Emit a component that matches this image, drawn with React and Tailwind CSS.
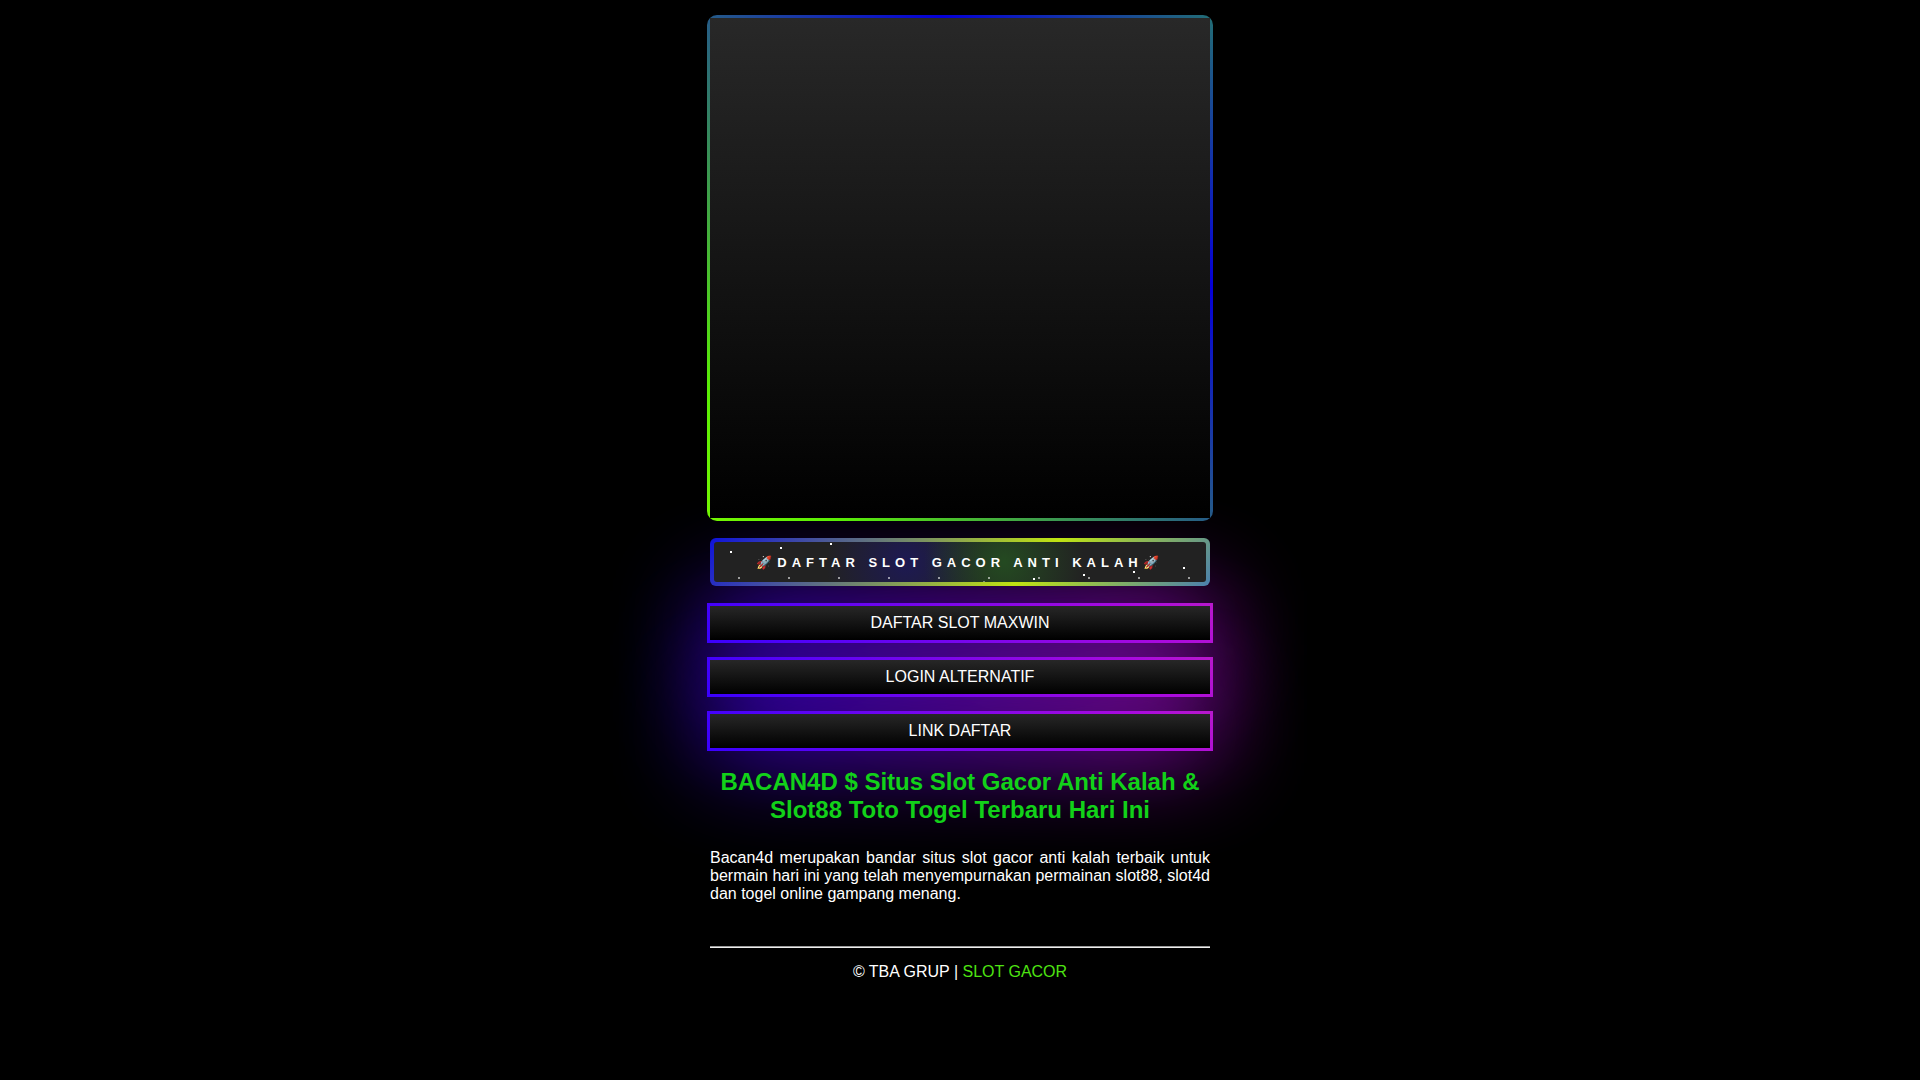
import React from 'react';

const LINKS = ['DAFTAR SLOT MAXWIN', 'LOGIN ALTERNATIF', 'LINK DAFTAR'];

const BRIGHT_STARS = [
  [16, 9], [66, 5], [116, 1], [319, 36], [369, 32], [419, 29], [469, 25]
];
const DIM_STARS = [25, 75, 125, 175, 225, 275, 325, 375, 425, 475];

const Stars = () => (
  <svg className="absolute inset-0 h-full w-full" aria-hidden="true">
    {DIM_STARS.map((x) => (
      <rect key={x} x={x - 1} y="35" width="2" height="2" fill="#fff" fillOpacity="0.55" />
    ))}
    {BRIGHT_STARS.map(([x, y]) => (
      <rect key={x} x={x} y={y} width="2" height="2" fill="#fff" />
    ))}
    <rect x="269" y="39" width="2" height="1" fill="#fff" fillOpacity="0.4" />
  </svg>
);

const Banner = () => (
  <button
    type="button"
    className="h-12 w-full rounded-md bg-[linear-gradient(135deg,#0f12dc_0%,#c0e312_64%,#4a80ae_100%)] p-1"
  >
    <span className="relative flex h-full items-center justify-center overflow-hidden rounded-[3px] bg-[#222] bg-[radial-gradient(circle_at_59%_50%,#244a21_0px,#244a2100_80px),radial-gradient(circle_at_39%_50%,#1d1953_0px,#1d195300_80px)] pt-px">
      <Stars />
      <span className="relative whitespace-nowrap text-[13px] font-bold tracking-[5px] text-white">
        🚀DAFTAR SLOT GACOR ANTI KALAH🚀
      </span>
    </span>
  </button>
);

const GlowLink = ({ label }) => (
  <a href="#" className="relative block text-white">
    <span className="absolute -inset-[3px] -z-10 bg-[linear-gradient(45deg,#3a00ff,#b80fd0)] opacity-95 blur-[50px]" />
    <span className="-mx-[3px] block bg-[linear-gradient(45deg,#3a00ff,#aa0ade_85%,#b818cc)] p-[3px]">
      <span className="block bg-[linear-gradient(to_bottom,#272727,#000)] py-2 text-center text-base leading-[18px]">
        {label}
      </span>
    </span>
  </a>
);

const App = () => (
  <div className="min-h-screen bg-black px-4 pt-[15px] pb-12 font-['Liberation_Sans',Arial,sans-serif] text-white">
    <main className="relative z-0 mx-auto w-full max-w-[500px]">
      <div className="-mx-[3px] rounded-[10px] bg-[linear-gradient(45deg,#74f602_0%,#5aee05_13%,#0500d8_73%,#236e74_100%)] p-[3px]">
        <div className="aspect-square bg-[linear-gradient(to_bottom,#282828,#000)]" />
      </div>

      <div className="mt-[17px]">
        <Banner />
      </div>

      <nav className="mt-[17px] flex flex-col gap-[14px]">
        {LINKS.map((label) => (
          <GlowLink key={label} label={label} />
        ))}
      </nav>

      <h1 className="mt-[17px] text-center text-2xl leading-7 font-bold text-[#12d119]">
        BACAN4D $ Situs Slot Gacor Anti Kalah &amp; Slot88 Toto Togel Terbaru Hari Ini
      </h1>

      <p className="mt-[25px] text-justify text-base leading-[18px]">
        Bacan4d merupakan bandar situs slot gacor anti kalah terbaik untuk bermain hari ini yang
        telah menyempurnakan permainan slot88, slot4d dan togel online gampang menang.
      </p>

      <hr className="mt-[43px] border-t border-b border-t-[#9a9a9a] border-b-[#eee]" />

      <footer className="mt-[15px] text-center text-base leading-[18px]">
        © TBA GRUP | <a href="#" className="text-[#4ee312]">SLOT GACOR</a>
      </footer>
    </main>
  </div>
);

export default App;
